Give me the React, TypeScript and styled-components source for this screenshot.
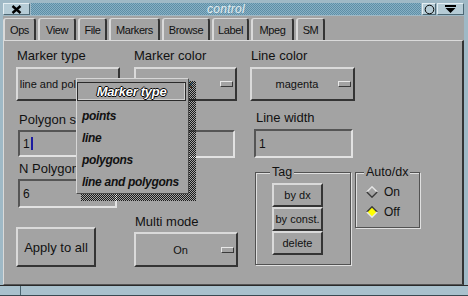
import React from 'react';
import styled, { createGlobalStyle } from 'styled-components';

const GRAY = '#a3a3a3';
const HI = '#dadada';
const LO = '#343434';

const GlobalStyle = createGlobalStyle`
  body {
    margin: 0;
    background: ${GRAY};
    font-family: 'Liberation Sans', Arial, sans-serif;
    color: #111;
  }
`;

const Window = styled.div`
  width: 468px;
  height: 296px;
  background: #9fb9c6;
  display: flex;
  flex-direction: column;
  overflow: hidden;
`;

const TitleBar = styled.div`
  display: flex;
  height: 12px;
  margin: 3px 4px 0 3px;
  gap: 1px;
`;

const TitleButton = styled.div<{ $w: number }>`
  width: ${({ $w }) => $w}px;
  flex-shrink: 0;
  box-sizing: border-box;
  background: #b6ccd6;
  border-top: 1px solid #e4eef2;
  border-left: 1px solid #e4eef2;
  border-right: 1px solid #4e6874;
  border-bottom: 1px solid #4e6874;
  display: flex;
  align-items: center;
  justify-content: center;
`;

const TitleText = styled.div`
  flex: 1;
  background: repeating-conic-gradient(#86b0c4 0 25%, #5f8ea6 0 50%) 0 0 / 2px 2px;
  color: #e4eef2;
  font-style: italic;
  font-size: 12px;
  line-height: 12px;
  text-align: center;
  letter-spacing: 0.3px;
`;

const Client = styled.div`
  flex: 1;
  margin: 1px 4px 0 3px;
  background: ${GRAY};
  display: flex;
  flex-direction: column;
`;

const TabRow = styled.div`
  display: flex;
  gap: 2px;
  padding-top: 2px;
  height: 24px;
  box-sizing: border-box;
`;

const Tab = styled.div<{ $w: number }>`
  width: ${({ $w }) => $w}px;
  height: 22px;
  box-sizing: border-box;
  border-top: 1px solid ${HI};
  border-left: 2px solid ${HI};
  border-right: 2px solid ${LO};
  border-radius: 3px 3px 0 0;
  display: flex;
  align-items: center;
  justify-content: center;
  font-size: 11px;
  letter-spacing: -0.4px;
`;

const Panel = styled.div`
  flex: 1;
  position: relative;
  border-top: 1px solid ${HI};
  border-left: 1px solid ${HI};
  border-right: 2px solid ${LO};
  border-bottom: 1px solid #555;
  padding: 8px 0 0 12px;
  display: grid;
  grid-template-columns: 118px 116px 1fr;
  align-items: start;
`;

const Column = styled.div`
  display: flex;
  flex-direction: column;
  align-items: flex-start;
`;

const Label = styled.div<{ $mt?: number; $ml?: number }>`
  font-size: 13px;
  line-height: 14px;
  height: 14px;
  white-space: nowrap;
  margin-top: ${({ $mt = 0 }) => $mt}px;
  margin-left: ${({ $ml = 0 }) => $ml}px;
`;

const Raised = styled.div<{ $w: number; $h: number; $mt?: number; $ml?: number }>`
  width: ${({ $w }) => $w}px;
  height: ${({ $h }) => $h}px;
  margin-top: ${({ $mt = 0 }) => $mt}px;
  margin-left: ${({ $ml = 0 }) => $ml}px;
  box-sizing: border-box;
  border-top: 2px solid ${HI};
  border-left: 2px solid ${HI};
  border-right: 2px solid ${LO};
  border-bottom: 2px solid ${LO};
  display: flex;
  align-items: center;
  justify-content: center;
  font-size: 11px;
  white-space: nowrap;
  overflow: hidden;
`;

const ChoiceText = styled.span`
  flex: 1;
  text-align: center;
  padding-left: 4px;
  white-space: nowrap;
`;

const Indicator = styled.span`
  width: 13px;
  height: 6px;
  flex-shrink: 0;
  box-sizing: border-box;
  margin-right: 2px;
  border-top: 1px solid #e8e8e8;
  border-left: 1px solid #e8e8e8;
  border-right: 1px solid #3a3a3a;
  border-bottom: 1px solid #3a3a3a;
`;

const BigButton = styled(Raised)`
  font-size: 13px;
`;

const Input = styled.div<{ $w: number; $h: number; $mt?: number; $ml?: number }>`
  width: ${({ $w }) => $w}px;
  height: ${({ $h }) => $h}px;
  margin-top: ${({ $mt = 0 }) => $mt}px;
  margin-left: ${({ $ml = 0 }) => $ml}px;
  box-sizing: border-box;
  border-top: 2px solid #555;
  border-left: 2px solid #555;
  border-right: 2px solid #e2e2e2;
  border-bottom: 2px solid #e2e2e2;
  padding-left: 3px;
  display: flex;
  align-items: center;
  font-size: 12px;
`;

const Cursor = styled.span`
  width: 2px;
  height: 13px;
  margin-left: 1px;
  background: #1c1ca0;
`;

const FrameRow = styled.div`
  display: flex;
  align-items: flex-start;
  margin-top: 14px;
`;

const Frame = styled.div<{ $w: number; $ml: number }>`
  width: ${({ $w }) => $w}px;
  margin-left: ${({ $ml }) => $ml}px;
  box-sizing: border-box;
  border: 1px solid #525252;
  box-shadow: inset 1px 1px 0 #e0e0e0, 1px 1px 0 #e0e0e0;
`;

const FrameLabel = styled.div<{ $ml: number }>`
  width: fit-content;
  margin: -8px 0 0 ${({ $ml }) => $ml}px;
  padding: 0 2px;
  background: ${GRAY};
  font-size: 12.5px;
  line-height: 14px;
`;

const TagStack = styled.div`
  display: flex;
  flex-direction: column;
  margin: 4px 0 9px 16px;
`;

const RadioList = styled.div`
  margin: 3px 0 5px;
`;

const RadioRow = styled.div`
  height: 20px;
  display: flex;
  align-items: center;
  gap: 6px;
  padding-left: 10px;
  font-size: 12px;
`;

const PopupWrap = styled.div`
  position: absolute;
  left: 72px;
  top: 37px;
  isolation: isolate;
  &::before {
    content: '';
    position: absolute;
    left: 5px;
    top: 3px;
    right: -7px;
    bottom: -7px;
    z-index: -1;
    background: repeating-conic-gradient(#1a1a1a 0 25%, transparent 0 50%) 0 0 / 2px 2px;
  }
`;

const Menu = styled.div`
  width: 113px;
  height: 116px;
  box-sizing: border-box;
  background: ${GRAY};
  border-top: 1px solid #d6d6d6;
  border-left: 1px solid #d6d6d6;
  border-right: 1px solid #4a4a4a;
  border-bottom: 1px solid #4a4a4a;
  padding: 3px 2px 0 0;
`;

const MenuHeader = styled.div`
  height: 19px;
  box-sizing: border-box;
  border: 1px solid #2a2a2a;
  box-shadow: inset -1px -1px 0 #d0d0d0;
  display: flex;
  align-items: center;
  justify-content: center;
  color: #fff;
  font-size: 13px;
  font-weight: bold;
  font-style: italic;
  letter-spacing: -0.3px;
  text-shadow: -1px 0 #000, 1px 0 #000, 0 -1px #000, 0 1px #000;
`;

const MenuList = styled.div`
  margin-top: 4px;
`;

const MenuItem = styled.div`
  height: 22px;
  display: flex;
  align-items: center;
  padding-left: 5px;
  font-size: 12px;
  font-weight: bold;
  font-style: italic;
  letter-spacing: -0.3px;
  white-space: nowrap;
`;

const BottomFrame = styled.div`
  height: 11px;
  box-sizing: border-box;
  border-top: 1px solid #2a2a2a;
  border-bottom: 1px solid #3a4a52;
  background: #a9c1cd;
  display: flex;
`;

const Handle = styled.div`
  width: 20px;
  border-right: 1px solid #4a6470;
`;

const tabs: [string, number][] = [
  ['Ops', 33],
  ['View', 38],
  ['File', 29],
  ['Markers', 51],
  ['Browse', 48],
  ['Label', 37],
  ['Mpeg', 43],
  ['SM', 29],
];

const Diamond = ({ on }: { on: boolean }) => (
  <svg width="12" height="12" viewBox="0 0 12 12">
    <polygon points="6,0.8 11.2,6 6,11.2 0.8,6" fill={on ? '#ffff00' : GRAY} />
    <polyline points="0.8,6 6,0.8 11.2,6" fill="none" stroke={on ? '#3a3a3a' : '#e6e6e6'} strokeWidth="1.4" />
    <polyline points="0.8,6 6,11.2 11.2,6" fill="none" stroke={on ? '#e6e6e6' : '#3a3a3a'} strokeWidth="1.4" />
  </svg>
);

const Choice = ({ text, w, h, mt }: { text: string; w: number; h: number; mt?: number }) => (
  <Raised $w={w} $h={h} $mt={mt}>
    <ChoiceText>{text}</ChoiceText>
    <Indicator />
  </Raised>
);

export default function App() {
  return (
    <>
      <GlobalStyle />
      <Window>
        <TitleBar>
          <TitleButton $w={27}>
            <svg width="11" height="9" viewBox="0 0 11 9">
              <path d="M1.5 1 L9.5 8 M9.5 1 L1.5 8" stroke="#000" strokeWidth="2.4" />
            </svg>
          </TitleButton>
          <TitleText>control</TitleText>
          <TitleButton $w={14}>
            <svg width="11" height="11" viewBox="0 0 11 11">
              <circle cx="5.5" cy="5.5" r="4.3" fill="none" stroke="#000" strokeWidth="1" />
            </svg>
          </TitleButton>
          <TitleButton $w={27}>
            <svg width="11" height="8" viewBox="0 0 11 8">
              <rect x="0" y="0" width="11" height="2" fill="#000" />
              <polygon points="0.5,3 10.5,3 5.5,8" fill="#000" />
            </svg>
          </TitleButton>
        </TitleBar>
        <Client>
          <TabRow>
            {tabs.map(([name, w]) => (
              <Tab key={name} $w={w}>{name}</Tab>
            ))}
          </TabRow>
          <Panel>
            <Column>
              <Label $ml={1}>Marker type</Label>
              <Choice text="line and polygons" w={104} h={34} mt={4} />
              <Label $mt={12} $ml={3}>Polygon size</Label>
              <Input $w={102} $h={27} $mt={3} $ml={2}>
                1<Cursor />
              </Input>
              <Label $mt={5} $ml={3}>N Polygons</Label>
              <Input $w={99} $h={29} $mt={3} $ml={2}>6</Input>
              <BigButton $w={80} $h={40} $mt={19}>Apply to all</BigButton>
            </Column>
            <Column>
              <Label>Marker color</Label>
              <Choice text="black" w={103} h={34} mt={4} />
              <Input $w={101} $h={28} $mt={29} />
              <Label $mt={57} $ml={1}>Multi mode</Label>
              <Choice text="On" w={104} h={35} mt={3} />
            </Column>
            <Column>
              <Label $ml={1}>Line color</Label>
              <Choice text="magenta" w={105} h={34} mt={4} />
              <Label $mt={10} $ml={6}>Line width</Label>
              <Input $w={99} $h={29} $mt={4} $ml={4}>1</Input>
              <FrameRow>
                <Frame $w={96} $ml={5}>
                  <FrameLabel $ml={14}>Tag</FrameLabel>
                  <TagStack>
                    <Raised $w={51} $h={24}>by dx</Raised>
                    <Raised $w={51} $h={24}>by const.</Raised>
                    <Raised $w={51} $h={24}>delete</Raised>
                  </TagStack>
                </Frame>
                <Frame $w={65} $ml={4}>
                  <FrameLabel $ml={8}>Auto/dx</FrameLabel>
                  <RadioList>
                    <RadioRow>
                      <Diamond on={false} />
                      On
                    </RadioRow>
                    <RadioRow>
                      <Diamond on />
                      Off
                    </RadioRow>
                  </RadioList>
                </Frame>
              </FrameRow>
            </Column>
            <PopupWrap>
              <Menu>
                <MenuHeader>Marker type</MenuHeader>
                <MenuList>
                  <MenuItem>points</MenuItem>
                  <MenuItem>line</MenuItem>
                  <MenuItem>polygons</MenuItem>
                  <MenuItem>line and polygons</MenuItem>
                </MenuList>
              </Menu>
            </PopupWrap>
          </Panel>
        </Client>
        <BottomFrame>
          <Handle />
        </BottomFrame>
      </Window>
    </>
  );
}
